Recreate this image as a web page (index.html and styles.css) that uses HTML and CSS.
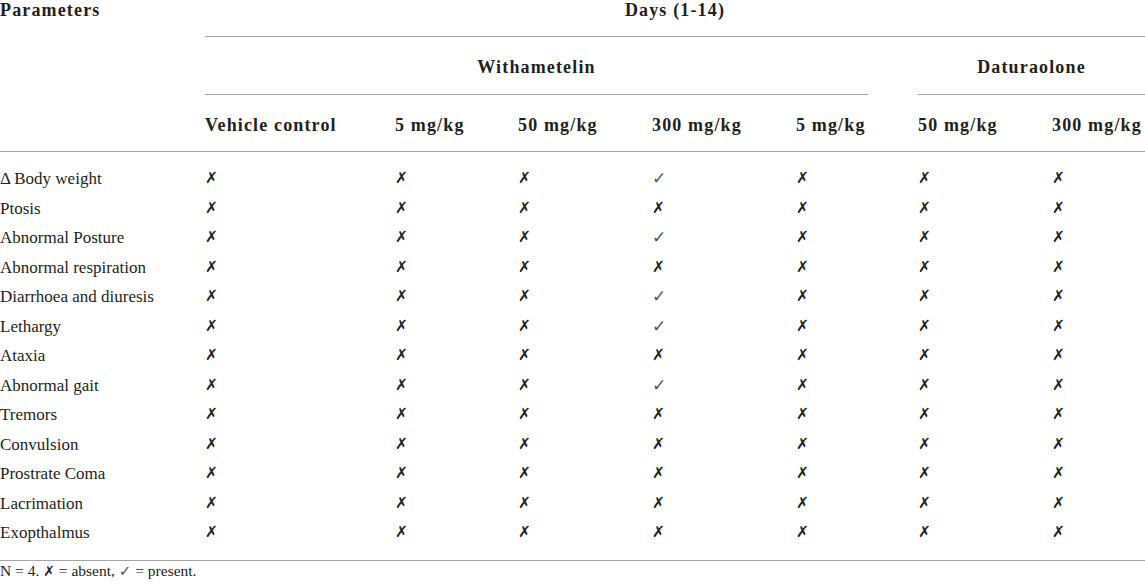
FILE: index.html
```html
<!DOCTYPE html>
<html>
<head>
<meta charset="utf-8">
<link rel="stylesheet" href="styles.css">
</head>
<body>
<div class="table">
  <div class="row r1">
    <div class="params hd">Parameters</div>
    <div class="days hd">Days (1-14)</div>
  </div>
  <div class="row r2">
    <div class="grp g1 hd">Withametelin</div>
    <div class="grp g2 hd">Daturaolone</div>
  </div>
  <div class="row r3">
    <div class="hd"></div>
    <div class="hd">Vehicle control</div>
    <div class="hd">5 mg/kg</div>
    <div class="hd">50 mg/kg</div>
    <div class="hd">300 mg/kg</div>
    <div class="hd">5 mg/kg</div>
    <div class="hd">50 mg/kg</div>
    <div class="hd">300 mg/kg</div>
  </div>
  <div class="body">
    <div class="row data"><div>Δ Body weight</div><div class="x">✗</div><div class="x">✗</div><div class="x">✗</div><div class="c">✓</div><div class="x">✗</div><div class="x">✗</div><div class="x">✗</div></div>
    <div class="row data"><div>Ptosis</div><div class="x">✗</div><div class="x">✗</div><div class="x">✗</div><div class="x">✗</div><div class="x">✗</div><div class="x">✗</div><div class="x">✗</div></div>
    <div class="row data"><div>Abnormal Posture</div><div class="x">✗</div><div class="x">✗</div><div class="x">✗</div><div class="c">✓</div><div class="x">✗</div><div class="x">✗</div><div class="x">✗</div></div>
    <div class="row data"><div>Abnormal respiration</div><div class="x">✗</div><div class="x">✗</div><div class="x">✗</div><div class="x">✗</div><div class="x">✗</div><div class="x">✗</div><div class="x">✗</div></div>
    <div class="row data"><div>Diarrhoea and diuresis</div><div class="x">✗</div><div class="x">✗</div><div class="x">✗</div><div class="c">✓</div><div class="x">✗</div><div class="x">✗</div><div class="x">✗</div></div>
    <div class="row data"><div>Lethargy</div><div class="x">✗</div><div class="x">✗</div><div class="x">✗</div><div class="c">✓</div><div class="x">✗</div><div class="x">✗</div><div class="x">✗</div></div>
    <div class="row data"><div>Ataxia</div><div class="x">✗</div><div class="x">✗</div><div class="x">✗</div><div class="x">✗</div><div class="x">✗</div><div class="x">✗</div><div class="x">✗</div></div>
    <div class="row data"><div>Abnormal gait</div><div class="x">✗</div><div class="x">✗</div><div class="x">✗</div><div class="c">✓</div><div class="x">✗</div><div class="x">✗</div><div class="x">✗</div></div>
    <div class="row data"><div>Tremors</div><div class="x">✗</div><div class="x">✗</div><div class="x">✗</div><div class="x">✗</div><div class="x">✗</div><div class="x">✗</div><div class="x">✗</div></div>
    <div class="row data"><div>Convulsion</div><div class="x">✗</div><div class="x">✗</div><div class="x">✗</div><div class="x">✗</div><div class="x">✗</div><div class="x">✗</div><div class="x">✗</div></div>
    <div class="row data"><div>Prostrate Coma</div><div class="x">✗</div><div class="x">✗</div><div class="x">✗</div><div class="x">✗</div><div class="x">✗</div><div class="x">✗</div><div class="x">✗</div></div>
    <div class="row data"><div>Lacrimation</div><div class="x">✗</div><div class="x">✗</div><div class="x">✗</div><div class="x">✗</div><div class="x">✗</div><div class="x">✗</div><div class="x">✗</div></div>
    <div class="row data"><div>Exopthalmus</div><div class="x">✗</div><div class="x">✗</div><div class="x">✗</div><div class="x">✗</div><div class="x">✗</div><div class="x">✗</div><div class="x">✗</div></div>
  </div>
  <div class="note">N = 4. <span class="x">✗</span> = absent, <span class="c">✓</span> = present.</div>
</div>
</body>
</html>
```

FILE: styles.css
```css
html, body {
  margin: 0;
  padding: 0;
  background: #fff;
}
body {
  font-family: "Liberation Serif", "Times New Roman", serif;
  color: #231f20;
  overflow: hidden;
}
.table {
  width: 1145px;
}
.row {
  display: grid;
  grid-template-columns: 155px 140px 73px 84px 94px 72px 84px 93px;
  column-gap: 50px;
  white-space: nowrap;
}
.hd {
  font-weight: bold;
  font-size: 18px;
  line-height: 20px;
  letter-spacing: 1.15px;
}
.r1 .params {
  grid-column: 1;
}
.r1 .days {
  grid-column: 2 / -1;
  text-align: center;
  padding-bottom: 16px;
  border-bottom: 1px solid #a6a6a6;
}
.r2 .grp {
  text-align: center;
  padding-top: 20px;
  padding-bottom: 17px;
  border-bottom: 1px solid #a6a6a6;
}
.r2 .g1 { grid-column: 2 / 7; }
.r2 .g2 { grid-column: 7 / 9; }
.r3 {
  padding-top: 20px;
  padding-bottom: 16px;
  border-bottom: 1px solid #a6a6a6;
}
.body {
  padding-top: 12px;
  padding-bottom: 12px;
  border-bottom: 1px solid #a6a6a6;
}
.data {
  font-size: 17px;
  line-height: 29.5px;
  height: 29.5px;
}
.x {
  font-family: "DejaVu Sans", sans-serif;
  font-size: 15.5px;
  color: #222;
}
.c {
  font-family: "DejaVu Sans", sans-serif;
  font-size: 17px;
  color: #555;
}
.note {
  font-size: 15.5px;
  line-height: 20px;
}
.note .x {
  font-size: 14px;
}
.note .c {
  font-size: 15px;
}
```
